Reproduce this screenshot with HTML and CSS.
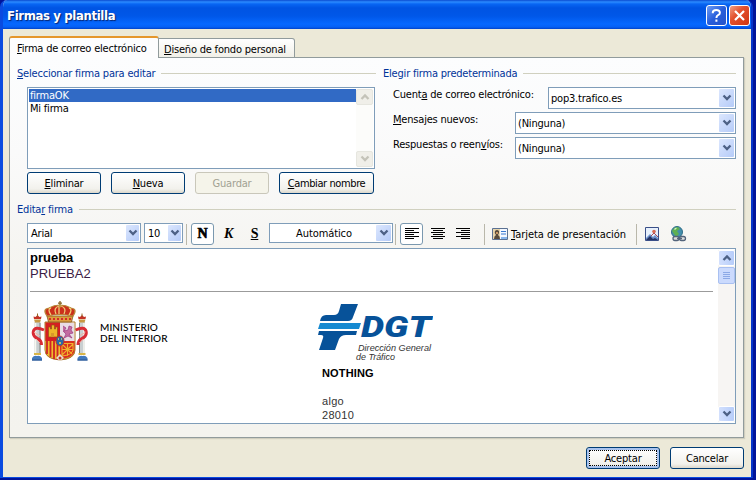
FILE: index.html
```html
<!DOCTYPE html>
<html lang="es">
<head>
<meta charset="utf-8">
<title>Firmas y plantilla</title>
<link rel="stylesheet" href="styles.css">
</head>
<body>
<svg width="0" height="0" class="defs">
  <symbol id="down" viewBox="0 0 10 8"><path d="M1.5 1.5 5 5l3.500-3.500" fill="none" stroke="currentColor" stroke-width="2.300"/></symbol>
  <symbol id="up" viewBox="0 0 10 8"><path d="M1.500 6 5 2.500 8.500 6" fill="none" stroke="currentColor" stroke-width="2.300"/></symbol>
</svg>
<div class="window">
  <header class="titlebar">
    <h1>Firmas y plantilla</h1>
    <button class="cap help"><svg width="19" height="19" viewBox="0 0 19 19"><path d="M5.800 7.200V6.500Q5.800 4 9.300 4T12.900 6.700Q12.900 8.300 11 9.200 9.400 10 9.400 12M9.400 13.600v2.200" fill="none" stroke="#fff" stroke-width="2"/></svg></button>
    <button class="cap close"><svg width="19" height="19" viewBox="0 0 19 19"><path d="M5 5l9 9M14 5l-9 9" stroke="#fff" stroke-width="2.200"/></svg></button>
  </header>
  <main class="body">
    <nav class="tabs">
      <div class="tab active"><span><u>F</u>irma de correo electrónico</span></div>
      <div class="tab"><span><u>D</u>iseño de fondo personal</span></div>
    </nav>
    <section class="panel">
      <div class="columns">
        <div class="left">
          <h2><span><u>S</u>eleccionar firma para editar</span></h2>
          <div class="listbox">
            <ul><li class="selected">firmaOK</li><li>Mi firma</li></ul>
            <div class="scroll off">
              <i><svg width="10" height="8"><use href="#up"/></svg></i>
              <i><svg width="10" height="8"><use href="#down"/></svg></i>
            </div>
          </div>
          <div class="buttons">
            <button class="btn"><span><u>E</u>liminar</span></button>
            <button class="btn"><span><u>N</u>ueva</span></button>
            <button class="btn disabled"><span>Guardar</span></button>
            <button class="btn wide"><span><u>C</u>ambiar nombre</span></button>
          </div>
        </div>
        <div class="right">
          <h2><span class="t-elegir">Elegir firma predeterminada</span></h2>
          <div class="field"><label class="l1">Cuent<u>a</u> de correo electrónico:</label><div class="select account"><span class="pop">pop3.trafico.es</span><i><svg width="10" height="8"><use href="#down"/></svg></i></div></div>
          <div class="field"><label class="l2"><u>M</u>ensajes nuevos:</label><div class="select"><span>(Ninguna)</span><i><svg width="10" height="8"><use href="#down"/></svg></i></div></div>
          <div class="field"><label class="l3">Respuestas o reen<u>v</u>íos:</label><div class="select"><span>(Ninguna)</span><i><svg width="10" height="8"><use href="#down"/></svg></i></div></div>
        </div>
      </div>
      <h2 class="edit"><span>Edita<u>r</u> firma</span></h2>
      <div class="toolbar">
        <div class="select font"><span>Arial</span><i><svg width="10" height="8"><use href="#down"/></svg></i></div>
        <div class="select size"><span>10</span><i><svg width="10" height="8"><use href="#down"/></svg></i></div>
        <hr class="s1">
        <button class="tool on bold">N</button>
        <button class="tool italic">K</button>
        <button class="tool under">S</button>
        <div class="select color"><span>Automático</span><i><svg width="10" height="8"><use href="#down"/></svg></i></div>
        <hr class="s2">
        <button class="tool on"><svg width="14" height="12"><path d="M0 .5h14M0 2.500h9M0 4.500h14M0 6.500h9M0 8.500h14M0 10.500h9" stroke="#000"/></svg></button>
        <button class="tool al"><svg width="14" height="12"><path d="M0 .5h14M2 2.500h10M0 4.500h14M2 6.500h10M0 8.500h14M2 10.500h10" stroke="#000"/></svg></button>
        <button class="tool al2"><svg width="14" height="12"><path d="M0 .5h14M5 2.500h9M0 4.500h14M5 6.500h9M0 8.500h14M5 10.500h9" stroke="#000"/></svg></button>
        <hr class="s3">
        <button class="card">
          <svg width="16" height="12"><path d="M.5.500h15v11H.5z" fill="#f4f8ff" stroke="#5b7192"/><path d="M1 1h7v10H1z" fill="#e6d4ac"/><path d="M2 11q0-3 2-4-2-2-1-4 2-2 4 0 .5 2-1 4 2 1 2 4z" fill="#574a3b"/><path d="M4 4h2v2H4z" fill="#c79765"/><path d="M9 3.500h5M9 6h5" stroke="#3979d0"/><path d="M9 9h6v2H9z" fill="#85b4ed"/></svg>
          <span><u>T</u>arjeta de presentación</span>
        </button>
        <hr class="s4">
        <svg class="pic" width="14" height="14"><path d="M.5.500h13v13H.5z" fill="#e7f0fc" stroke="#3a4f88"/><path d="M1 11 5 7l3 3 2-2 3 3v2H1z" fill="#6c91cb"/><path d="M1 13l4-4 3 3 2-1 3 2z" fill="#263363"/><circle cx="9" cy="4.500" r="1.800" fill="#d86b54"/><path d="m6 9 3-3 4 4" fill="none" stroke="#a94c58"/></svg>
        <svg class="globe" width="17" height="16"><circle cx="7" cy="6" r="5.500" fill="#438eac" stroke="#306d87"/><path d="M2 5q2-4 6-4l2 2-3 2 2 3-3 3Q4 8 2 5z" fill="#5fb052"/><path d="M4 3q2-2 3-1L5 4z" fill="#d6f2bd"/><rect x="3" y="10.500" width="6" height="4" rx="2" fill="#ddd" stroke="#53647b" stroke-width="1.300"/><rect x="9.500" y="10.500" width="6" height="4" rx="2" fill="#ddd" stroke="#53647b" stroke-width="1.300"/><path d="M7 12.500h5" stroke="#53647b" stroke-width="1.500"/></svg>
      </div>
      <div class="editor">
        <article>
          <p class="p1">prueba</p>
          <p class="p2">PRUEBA2</p>
          <hr>
          <div class="signature">
            <svg class="shield" width="58" height="62" viewBox="0 0 58 62">
              <g id="pillar"><path d="M3.500 21h6v31h-6z" fill="#c9cfd1"/><path d="M4.500 22v30" stroke="#f7f7f0" stroke-width="1.500"/><path d="M9 22v30" stroke="#7c8581"/><path d="M3 18.500h7l-1 3H4z" fill="#c89842"/><path d="M3 18l-.5-2.500 2 .500L6.500 14l2 2 2-.5L10 18z" fill="#c43125"/><path d="M6.500 12.500v3" stroke="#916825"/><path d="M3 52h7v2H3z" fill="#d8b548"/><path d="M1 57q2-3 5-2 3-1 5 2v2.500H1z" fill="#4279bd"/><path d="M1 59h10" stroke="#28558e"/><path d="M13 29Q4 25 2.500 30t5 8q3 2 3 6" fill="none" stroke="#d82c35" stroke-width="3"/><path d="M3 31l6 4M5 38l4 4" stroke="#f5b0a1"/></g>
              <use href="#pillar" transform="translate(57.500 0) scale(-1 1)"/>
              <path d="M14 21h30v28q0 9-15 10Q14 58 14 49z" fill="#d9b13c" stroke="#a9752c" stroke-width="1"/>
              <path d="M14.500 21.500H29V40H14.500z" fill="#d61f22"/>
              <path d="M29 21.500h14.500V40H29z" fill="#e9dce5"/>
              <path d="M17.500 36V26h2v2h1v-4h3v4h1v-2h2v10z" fill="#efb829" stroke="#975018" stroke-width=".7"/><path d="M20 32h3v4h-3z" fill="#d99a2a"/>
              <path d="m32 25 3 2-2 3 4-1 1-4 3 1-1 3 2 3-4 1 3 4-4-2-4 2 2-4-3-3" fill="#c36ca1" stroke="#9a397f" stroke-width=".7"/>
              <path d="M14.500 40H29v18Q15 57 14.500 49z" fill="#efba2c"/><path d="M16 40v13M19.500 40v16M23 40v18M26.500 40v19" stroke="#ce2426" stroke-width="1.800"/>
              <path d="M29 40h14.500v9q-.5 8-14.500 9z" fill="#d9301f"/><path d="M31 42.500h11v6.500q-1 5-11 6zM31 48.500h11M36.500 42v13M31 43l10 10M42 43 31 54" fill="none" stroke="#f0b02d" stroke-width="1.100"/>
              <path d="m25 57 4-4 4 4-4 3z" fill="#e7dfcf"/><circle cx="29" cy="57" r="1.500" fill="#c33526"/>
              <ellipse cx="29" cy="40" rx="4" ry="5" fill="#2869aa" stroke="#bb3430"/><path d="M27 38h1m2 0h1m-3 4h2" stroke="#ebd354" stroke-width="1.300"/>
              <path d="M16 15h26l-1.500 6h-23z" fill="#dd9d3b" stroke="#805321" stroke-width=".8"/><path d="M18 18h22" stroke="#d42a29" stroke-width="2" stroke-dasharray="2 2"/>
              <path d="M16 15q-5-7 2-8 5-3 11-3t11 3q7 1 2 8-13-3-26 0z" fill="#cb301c" stroke="#b78636" stroke-width="1.200"/>
              <path d="M20 14q-4-6 0-7M25 13q-3-6 3-8v8M33 13q3-6-3-8M38 14q4-6 0-7" fill="none" stroke="#f0cd76" stroke-width="1.300"/>
              <path d="M29 0v6M27 2.200h4" stroke="#856423" stroke-width="1.300"/><circle cx="29" cy="5" r="1.500" fill="#bd9c46"/>
            </svg>
            <p class="ministry">MINISTERIO<br>DEL INTERIOR</p>
            <div class="dgt">
              <svg width="116" height="60" viewBox="0 0 116 60">
                <path d="M24 1h17L36 14Q35 18 31 18H3q1-6 6-6h8q4 0 5-4z" fill="#075299"/>
                <path d="M3 20h41l-2 6H1z" fill="#168ad1"/>
                <path d="M2 28h38l-1 4h-10q-5 0-7 4l-4 11H2l4-12q1-3-2-3H1z" fill="#075299"/>
                <text x="44" y="34" textLength="70" lengthAdjust="spacingAndGlyphs" class="dgt-name">DGT</text>
                <text x="41" y="48" textLength="73" lengthAdjust="spacingAndGlyphs" class="dgt-sub">Dirección General</text>
                <text x="39" y="57" textLength="39" lengthAdjust="spacingAndGlyphs" class="dgt-sub">de Tráfico</text>
              </svg>
              <p class="nothing">NOTHING</p>
              <p class="address">algo<br>28010</p>
            </div>
          </div>
        </article>
        <div class="scroll">
          <i><svg width="10" height="8"><use href="#up"/></svg></i>
          <b><svg width="7" height="8"><path d="M0 .5h7M0 2.500h7M0 4.500h7M0 6.500h7" stroke="#8ca9e6"/></svg></b>
          <i class="last"><svg width="10" height="8"><use href="#down"/></svg></i>
        </div>
      </div>
    </section>
    <footer>
      <button class="btn default"><span>Aceptar</span></button>
      <button class="btn"><span>Cancelar</span></button>
    </footer>
  </main>
</div>
</body>
</html>
```
FILE: styles.css
```css
* { box-sizing: border-box; }
body { margin: 0; width: 756px; height: 480px; overflow: hidden; background: #00149a; font: 11px/13px "DejaVu Sans Condensed", "DejaVu Sans", sans-serif; font-stretch: condensed; color: #000; letter-spacing: -0.2px; }
h1, h2, p, ul { margin: 0; padding: 0; font-weight: normal; }
li { list-style: none; }
button { font: inherit; letter-spacing: inherit; color: inherit; padding: 0; margin: 0; border: 0; background: none; }
svg { display: block; flex: none; }
.defs { position: absolute; }
u { text-decoration: underline; text-underline-offset: 1px; text-decoration-thickness: 1px; text-decoration-skip-ink: none; }
span, label { white-space: nowrap; }

.window { width: 753px; height: 478px; border: solid #0a4be0; border-width: 0 2px 1px 3px; border-right-color: #0534c8; border-radius: 7px 7px 0 0; background: #ece9d8; overflow: hidden; }
.titlebar { height: 29px; margin: 0 -2px 0 -3px; padding: 5px 3px 3px 7px; display: flex; align-items: flex-start; background: linear-gradient(#0b4bd0 0, #2b8bff 2px, #0866f3 4px, #0054e3 8px, #0057e8 16px, #0668ff 24px, #0560f5 27px, #0042ca 29px); }
h1 { flex: 1; color: #fff; font: bold 13px/22px "DejaVu Sans Condensed", sans-serif; font-stretch: condensed; letter-spacing: -0.36px; text-shadow: 1px 1px 1px #08256f; }
.cap { width: 21px; height: 21px; border: 1px solid #fff; border-radius: 3px; margin-left: 2px; }
.help { background: linear-gradient(135deg, #6d9cf4, #285edb 50%, #2453c9); }
.close { background: linear-gradient(135deg, #f0a086, #e3512d 40%, #cf3512); }

.body { padding: 7px 7px 0 6px; }
.tabs { height: 22px; display: flex; align-items: flex-end; position: relative; margin-bottom: -1px; }
.tab { height: 20px; width: 136px; padding: 4px 0 0 5px; border: 1px solid #919b9c; border-left: 0; border-radius: 0 3px 0 0; background: linear-gradient(#fff, #f1f0e8); }
.tab.active { height: 22px; width: 150px; padding: 4px 0 0 7px; border: 1px solid #919b9c; border-top: 2px solid #e5972d; border-bottom: 0; border-radius: 3px 3px 0 0; background: #fdfdfe; }
.panel { height: 381px; border: 1px solid #919b9c; padding: 8px 7px 0; background: linear-gradient(#fcfdfe, #fafafa 25%, #f5f4f0 55%, #f4f3ee); box-shadow: 1px 1px 1px #d0cebf; }
.columns { height: 136px; display: flex; gap: 7px; }
.left { width: 359px; }
.right { flex: 1; }
h2 { height: 16px; display: flex; align-items: center; gap: 6px; color: #003399; font-size: 11px; line-height: 16px; }
h2::after { content: ""; flex: 1; height: 1px; margin-top: -1px; background: #d0d0bf; }
.listbox { margin: 5px 1px 0 10px; height: 82px; border: 1px solid #7f9db9; background: #fff; display: flex; padding: 1px; }
ul { flex: 1; }
li { height: 13px; padding-left: 1px; line-height: 14px; }
.selected { background: #316ac5; color: #fff; }
.scroll { width: 17px; display: flex; flex-direction: column; justify-content: space-between; background: #f7f5f3; }
.scroll.off { color: #c6c5bb; background: #fcfcfa; }
.scroll i, .scroll b, .select i { display: flex; align-items: center; justify-content: center; flex: none; }
.scroll i { height: 16px; border: 1px solid #fff; border-radius: 2px; background: linear-gradient(90deg, #d3e0fd, #b7cdfa); color: #4d6185; }
.scroll.off i { background: #f0efe9; border-color: #e6e6df; color: #c4c3b9; }
.buttons { margin: 3px 0 0 10px; display: flex; gap: 10px; }
.btn { width: 74px; height: 22px; border: 1px solid #003c74; border-radius: 3px; background: linear-gradient(#fff, #f2f1ec 80%, #dcd7cb); display: flex; align-items: center; justify-content: center; }
.btn.wide { width: 95px; letter-spacing: -0.4px; }
.btn.disabled { border-color: #c9c7ba; background: #f5f4ea; color: #a1a192; }
.default { box-shadow: inset 0 0 0 2px #a9c3ee; padding: 2px; }
.default span { flex: 1; height: 16px; line-height: 15px; border: 1px dotted #000; }

.field { display: flex; height: 22px; margin-bottom: 3px; padding-left: 10px; }
h2 + .field { margin-top: 5px; }
.field label { width: 122px; padding-top: 1px; }
.field .l1 { width: 155px; }
.select { flex: 1; height: 22px; border: 1px solid #7f9db9; background: #fff; display: flex; padding: 1px; align-items: center; }
.select span { flex: 1; padding-left: 1px; }
.select i { width: 15px; height: 100%; border-radius: 1px; background: linear-gradient(135deg, #dce7fe, #b5cbf8); color: #4d6185; }

.toolbar { height: 24px; margin: 4px 0 2px 10px; display: flex; align-items: center; }
.toolbar hr { width: 1px; height: 21px; margin: 0; border: 0; background: #b9b7aa; }
.toolbar .select { flex: none; height: 20px; margin-top: -2px; }
.toolbar .font { width: 114px; }
.toolbar .size { width: 39px; margin-left: 3px; }
.toolbar .size i, .toolbar .font i { width: 13px; }
.toolbar .select span { padding-left: 2px; }
.toolbar .color { width: 124px; }
.toolbar .color span { padding: 0 0 0 1px; text-align: center; letter-spacing: -0.1px; }
.toolbar .s1 { margin: 0 4px 0 3px; }
.toolbar .s2 { margin: 0 4px 0 2px; }
.toolbar .s3 { margin: 0 7px 0 10px; }
.toolbar .s4 { margin: 0 8px 0 10px; }
.tool { width: 23px; height: 22px; display: flex; align-items: center; justify-content: center; font: bold 14px/20px "Liberation Serif", serif; margin-right: 3px; }
.tool.on { border: 1px solid #7a98af; border-radius: 3px; background: #fff; }
.tool.bold { font-weight: 900; -webkit-text-stroke: 0.7px #000; }
.tool.italic { font-style: italic; }
.tool.under { text-decoration: underline; }
.al { margin-right: 3px; }
.al2 { margin-right: 0; margin-left: -1px; }
.card { display: flex; align-items: center; gap: 3px; letter-spacing: -0.04px; }
.globe { margin-left: 11px; }

.editor { height: 176px; margin-left: 10px; border: 1px solid #7f9db9; background: #fff; display: flex; padding: 1px 0 1px 0; }
article { flex: 1; padding-left: 2px; overflow: hidden; font-family: "Liberation Sans", sans-serif; font-stretch: normal; letter-spacing: 0; }
.p1, .p2 { font-size: 13px; line-height: 16px; }
.p1 { font-weight: bold; }
.p2 { color: #3b1c45; }
article hr { margin: 9px 5px 0 0; height: 1px; border: 0; background: #9b9b9b; }
.signature { display: flex; padding-left: 1px; }
.shield { margin-top: 9px; }
.ministry { width: 228px; padding: 30px 0 0 11px; font: 500 10px/11px Lato, sans-serif; letter-spacing: 0.1px; }
.dgt { padding-top: 11px; }
.dgt-name { font: italic 900 29px Roboto, sans-serif; fill: #075299; }
.dgt-sub { font: italic 9px "Liberation Sans", sans-serif; fill: #333; }
.nothing { margin: 4px 0 0 5px; font-weight: bold; font-size: 11px; letter-spacing: 0.15px; }
.address { margin: 14px 0 0 5px; font-size: 11px; line-height: 14px; letter-spacing: 0.3px; color: #333; }
.editor .scroll { justify-content: flex-start; }
.editor .scroll b { height: 17px; margin-top: 1px; border: 1px solid #a9c0f1; border-radius: 2px; background: #cbdafd; }
.editor .scroll .last { margin-top: auto; }

footer { display: flex; justify-content: flex-end; gap: 10px; margin-top: 9px; }
```
